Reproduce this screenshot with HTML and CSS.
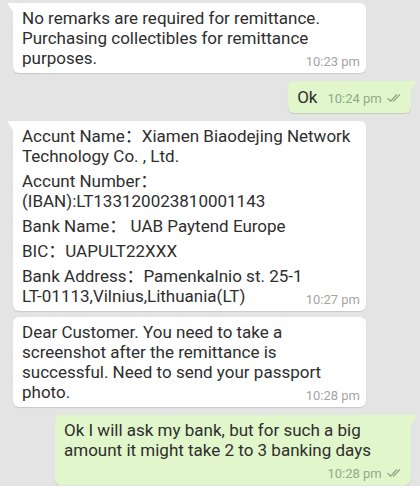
FILE: index.html
```html
<!DOCTYPE html>
<html>
<head>
    <meta charset="UTF-8">
    <title>Chat</title>
    <link rel="stylesheet" href="styles.css">
</head>
<body>
    <div class="chat">
        <div class="msg in tail">
            <span class="text">No remarks are required for remittance. Purchasing collectibles for remittance purposes.</span><span class="meta">10:23 pm</span>
        </div>

        <div class="msg out tail short">
            <span class="text">Ok</span><span class="meta">10:24 pm <svg class="ticks" viewBox="0 0 16 10"><path d="M1 5.5 L3.6 8.3 L9.5 1.8 M6.4 8.3 L12.5 1.8"/></svg></span>
        </div>

        <div class="msg in tail">
            <div class="para">Accunt Name：Xiamen Biaodejing Network Technology Co. , Ltd.</div>
            <div class="para">Accunt Number：(IBAN):LT133120023810001143</div>
            <div class="para">Bank Name： UAB Paytend Europe</div>
            <div class="para">BIC：UAPULT22XXX</div>
            <div class="para">Bank Address：Pamenkalnio st. 25-1<br>LT-01113,Vilnius,Lithuania(LT)<span class="meta">10:27 pm</span></div>
        </div>

        <div class="msg in">
            <span class="text">Dear Customer. You need to take a screenshot after the remittance is successful. Need to send your passport photo.</span><span class="meta">10:28 pm</span>
        </div>

        <div class="msg out tail">
            <span class="text">Ok I will ask my bank, but for such a big amount it might take 2 to 3 banking days</span><span class="meta">10:28 pm <svg class="ticks" viewBox="0 0 16 10"><path d="M1 5.5 L3.6 8.3 L9.5 1.8 M6.4 8.3 L12.5 1.8"/></svg></span>
        </div>
    </div>
</body>
</html>
```

FILE: styles.css
```css
body {
    margin: 0;
    background-color: #e4e4e4;
    font-family: Roboto, "Noto Sans CJK SC", sans-serif;
    color: #2e2e2e;
}

.chat {
    display: flex;
    flex-direction: column;
    padding: 3px 9px 0 13px;
}

.msg {
    position: relative;
    display: flow-root;
    max-width: 353px;
    box-sizing: border-box;
    padding: 5px 6px 4px 9px;
    font-size: 17px;
    line-height: 20px;
    border-radius: 6px;
    box-shadow: 0 1px 1px rgba(0, 0, 0, 0.12);
    margin-top: 6px;
}
.msg.tail {
    margin-top: 8px;
}
.chat .msg:first-child {
    margin-top: 0;
}

.in {
    align-self: flex-start;
    background-color: #ffffff;
}
.in.tail {
    border-top-left-radius: 0;
}
.in.tail::before {
    content: "";
    position: absolute;
    left: -6px;
    top: 0;
    border-top: 9px solid #ffffff;
    border-left: 6px solid transparent;
}

.out {
    align-self: flex-end;
    background-color: #e1f6cb;
    max-width: 356px;
    padding-right: 8px;
}
.out.tail {
    border-top-right-radius: 0;
}
.out.tail::before {
    content: "";
    position: absolute;
    right: -6px;
    top: 0;
    border-top: 9px solid #e1f6cb;
    border-right: 6px solid transparent;
}
.out.short {
    padding-top: 6px;
    padding-bottom: 6px;
}

.para + .para {
    margin-top: 5px;
}

.meta {
    float: right;
    margin: 7px 0 0 12px;
    font-size: 13px;
    line-height: 14px;
    color: #a5a5a5;
    white-space: nowrap;
}
.out .meta {
    color: #93a98c;
}
.out.short .meta {
    margin-top: 5px;
    margin-left: 10px;
}

.ticks {
    width: 16px;
    height: 10px;
    margin-left: 2px;
    fill: none;
    stroke: #93a98c;
    stroke-width: 1.3;
    stroke-linecap: round;
    stroke-linejoin: round;
}
```
